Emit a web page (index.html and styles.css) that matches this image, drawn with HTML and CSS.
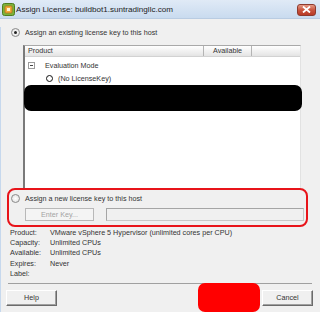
FILE: index.html
```html
<!DOCTYPE html>
<html lang="en">

<head>
  <meta charset="UTF-8">
  <title>Assign License</title>
  <link rel="stylesheet" href="styles.css">
</head>

<body>

  <div class="window">
    <div class="titlebar">
      <svg class="app-icon" width="13" height="13" viewBox="0 0 13 13">
        <rect x="0.5" y="0.5" width="12" height="12" rx="2" fill="#7bb13a" stroke="#4f7d1f"/>
        <rect x="3" y="3" width="7" height="7" rx="1" fill="#f1a93a" stroke="#b5701a" stroke-width="0.8"/>
        <rect x="5" y="5" width="3" height="3" fill="#fff3d0"/>
      </svg>
      <span class="title">Assign License: buildbot1.suntradingllc.com</span>
      <div class="close">
        <svg width="9" height="7" viewBox="0 0 9 7">
          <path d="M1 0.5 L8 6.5 M8 0.5 L1 6.5" stroke="#fff" stroke-width="1.8"/>
        </svg>
      </div>
    </div>

    <div class="frame">
      <div class="opt first">
        <span class="radio checked"></span>
        <span>Assign an existing license key to this host</span>
      </div>

      <div class="grid-box">
        <div class="grid-head">
          <div class="col-product">Product</div>
          <div class="col-avail">Available</div>
        </div>
        <div class="tree-row">
          <span class="expander"></span>
          <span>Evaluation Mode</span>
        </div>
        <div class="tree-row child">
          <span class="ring"></span>
          <span>(No LicenseKey)</span>
        </div>
        <div class="blackout"></div>
      </div>

      <div class="new-key">
        <div class="opt">
          <span class="radio"></span>
          <span>Assign a new license key to this host</span>
        </div>
        <div class="key-row">
          <button type="button" class="btn-disabled" disabled>Enter Key...</button>
          <div class="key-field"></div>
        </div>
      </div>

      <div class="info">
        <span>Product:</span><span>VMware vSphere 5 Hypervisor (unlimited cores per CPU)</span>
        <span>Capacity:</span><span>Unlimited CPUs</span>
        <span>Available:</span><span>Unlimited CPUs</span>
        <span>Expires:</span><span>Never</span>
        <span>Label:</span><span></span>
      </div>

      <div class="separator"></div>

      <div class="buttons">
        <button type="button" class="btn">Help</button>
        <button type="button" class="btn">Cancel</button>
      </div>
    </div>

    <div class="redact"></div>
  </div>

</body>

</html>
```

FILE: styles.css
```css
body {
  margin: 0;
  font-family: "Liberation Sans", Arial, sans-serif;
  font-size: 7.2px;
  color: #333;
}

.window {
  position: relative;
  width: 320px;
  height: 312px;
  overflow: hidden;
  background-color: #f0f0f0;
}

.titlebar {
  height: 19px;
  display: flex;
  align-items: center;
  padding: 1px 0 0 2px;
  box-sizing: border-box;
  border-bottom: 1px solid #b9cce2;
  background: linear-gradient(to bottom, #e0eaf6, #c9dbef);
}

.app-icon {
  margin-right: 1px;
}

.title {
  font-size: 8.1px;
  color: #1d1d1d;
}

.close {
  margin-left: auto;
  margin-right: 4px;
  width: 19px;
  height: 12px;
  box-sizing: border-box;
  border: 1px solid #8d3a2e;
  border-radius: 3px;
  background: linear-gradient(to bottom, #e59a86, #c9553f 50%, #b93a26);
  display: flex;
  align-items: center;
  justify-content: center;
}

.frame {
  height: 292px;
  box-sizing: border-box;
  border-left: 1px solid #c6d8ed;
  border-bottom: 2px solid #c9dbee;
}

.opt {
  display: flex;
  align-items: center;
  gap: 5px;
  height: 10px;
  margin-left: 10px;
}

.opt.first {
  margin-top: 8px;
}

.radio {
  width: 7px;
  height: 7px;
  border: 1px solid #8a8a8a;
  border-radius: 50%;
  background: radial-gradient(circle, #ffffff, #dcdcdc);
  display: flex;
  align-items: center;
  justify-content: center;
}

.radio.checked::after {
  content: "";
  width: 3px;
  height: 3px;
  border-radius: 50%;
  background-color: #222;
}

.grid-box {
  margin: 8px 0 0 22px;
  width: 278px;
  height: 143px;
  box-sizing: border-box;
  background-color: #fff;
  border-top: 1px solid #a9a9a9;
  border-left: 2px solid #7a7a7a;
  border-right: 1px solid #e2e2e2;
}

.grid-head {
  height: 10px;
  display: flex;
  align-items: center;
  border-bottom: 1px solid #d2d2d2;
  background: linear-gradient(to bottom, #ffffff, #e4e4e4);
}

.col-product {
  width: 175px;
  padding-left: 3px;
  border-right: 1px solid #b4b4b4;
  line-height: 10px;
}

.col-avail {
  width: 47px;
  text-align: center;
  border-right: 1px solid #b4b4b4;
  line-height: 10px;
}

.tree-row {
  display: flex;
  align-items: center;
  height: 10px;
  margin-top: 3px;
  padding-left: 3px;
}

.expander {
  width: 5px;
  height: 5px;
  border: 1px solid #9c9c9c;
  margin-right: 10px;
  position: relative;
}

.expander::after {
  content: "";
  position: absolute;
  left: 1px;
  top: 2px;
  width: 3px;
  height: 1px;
  background-color: #444;
}

.tree-row.child {
  padding-left: 21px;
}

.ring {
  width: 5px;
  height: 5px;
  border: 1.5px solid #111;
  border-radius: 50%;
  margin-right: 5px;
}

.blackout {
  margin: 2px 0 0 -1px;
  width: 278px;
  height: 26px;
  border-radius: 7px;
  background-color: #000;
}

.new-key {
  margin-left: 6px;
  width: 301px;
  height: 39px;
  box-sizing: border-box;
  padding: 3px 0 0 2px;
  border: 2px solid #e8141a;
  border-radius: 8px;
}

.new-key .opt {
  margin-left: 0;
}

.key-row {
  display: flex;
  gap: 12px;
  margin: 5px 0 0 14px;
}

.btn-disabled {
  width: 69px;
  height: 13px;
  padding: 0;
  font-family: inherit;
  font-size: 7.2px;
  color: #a3a3a3;
  background-color: #f4f4f4;
  border: 1px solid #b8b8b8;
}

.key-field {
  width: 198px;
  height: 13px;
  box-sizing: border-box;
  border: 1px solid #a5a5a5;
  border-right-color: #c8c8c8;
  border-bottom-color: #c8c8c8;
  background-color: #f0f0f0;
}

.info {
  display: grid;
  grid-template-columns: 40px 1fr;
  grid-auto-rows: 10.4px;
  align-items: center;
  margin-left: 9px;
}

.separator {
  margin: 4px 0 0 7px;
  width: 304px;
  height: 1px;
  background-color: #a0a0a0;
}

.buttons {
  display: flex;
  justify-content: space-between;
  margin: 6px 7px 0 5px;
}

.btn {
  width: 51px;
  height: 16px;
  padding: 0;
  font-family: inherit;
  font-size: 7.2px;
  color: #333;
  background-color: #f0f0f0;
  border: 1px solid;
  border-color: #ffffff #6b6b6b #6b6b6b #ffffff;
  box-shadow: inset -1px -1px 0 #a0a0a0;
}

.redact {
  position: absolute;
  left: 198px;
  top: 283px;
  width: 62px;
  height: 29px;
  border-radius: 7px;
  background-color: #ff0000;
}
```
